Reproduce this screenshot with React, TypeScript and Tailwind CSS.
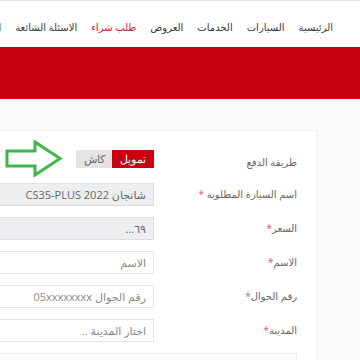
const navItems = [
  { label: "الرئيسية" },
  { label: "السيارات" },
  { label: "الخدمات" },
  { label: "العروض" },
  { label: "طلب شراء", active: true },
  { label: "الاسئلة الشائعة" },
  { label: "اتصل بنا" },
];

const Label = ({ text, required }: { text: string; required?: boolean }) => (
  <div className="w-[162px] shrink-0 pr-[19px] text-[10px] text-[#666]">
    {text}
    {required && <span className="text-[#e8526e]">*</span>}
  </div>
);

const Field = ({
  label,
  value,
  placeholder,
  disabled,
}: {
  label: string;
  value?: string;
  placeholder?: string;
  disabled?: boolean;
}) => (
  <div className="flex items-center h-[23px] mb-[11px]">
    <Label text={label} required />
    <input
      readOnly
      value={value ?? ""}
      placeholder={placeholder}
      className={`h-[23px] w-[420px] border px-[7px] text-[11px] outline-none placeholder:text-[#8a8a8a] ${
        disabled ? "bg-[#eceef0] border-[#dcdfe3] text-[#666]" : "bg-white border-[#e2e4e7] text-[#666]"
      }`}
    />
  </div>
);

const Arrow = () => (
  <svg width="58" height="37" viewBox="0 0 58 37" className="shrink-0">
    <path
      d="M2 11 H30 V2 L55 18.5 L30 35 V26 H2 Z"
      fill="none"
      stroke="#3fb54b"
      strokeWidth="3"
    />
  </svg>
);

export default function App() {
  return (
    <div
      dir="rtl"
      className="w-[360px] h-[360px] overflow-hidden bg-[#fafafa]"
      style={{ fontFamily: '"Open Sans", "DejaVu Sans", sans-serif' }}
    >
      <header className="h-[47px] bg-white border-t border-[#e5e5e5] flex items-center pt-[7px]">
        <nav className="flex items-center gap-[14px] pr-[27px] whitespace-nowrap text-[10px] text-[#3a3a3a]">
          {navItems.map((item) => (
            <span key={item.label} className={item.active ? "text-[#d0243a]" : ""}>
              {item.label}
            </span>
          ))}
        </nav>
      </header>

      <div className="h-[52px] bg-[#c3000f]" />

      <div className="pt-[31px] mr-[43px]">
        <div className="w-[700px] bg-white border-t border-r border-[#f0f0f0] pt-[19px]">
          <div className="flex items-center h-[18px] mb-[15px]">
            <div className="w-[162px] shrink-0 pr-[19px] text-[10px] text-[#666] pt-[6px]">
              طريقة الدفع
            </div>
            <div className="flex">
              <button className="h-[18px] w-[42px] bg-[#c8000f] text-white text-[11px] font-light">تمويل</button>
              <button className="h-[18px] w-[36px] bg-[#e4e4e4] text-[#666] text-[11px] font-light">كاش</button>
            </div>
            <div className="mr-[13px] -mt-[2px]">
              <Arrow />
            </div>
          </div>

          <Field label="اسم السيارة المطلوبة " value="شانجان CS35-PLUS 2022" disabled />
          <Field label="السعر" value="٦٩..." disabled />
          <Field label="الاسم" placeholder="الاسم" />
          <Field label="رقم الجوال" placeholder="رقم الجوال 05xxxxxxxx" />
          <Field label="المدينة" placeholder="اختار المدينة .." />

          <div className="mr-[19px] h-[30px] border border-[#ececec] bg-white" />
        </div>
      </div>
    </div>
  );
}
